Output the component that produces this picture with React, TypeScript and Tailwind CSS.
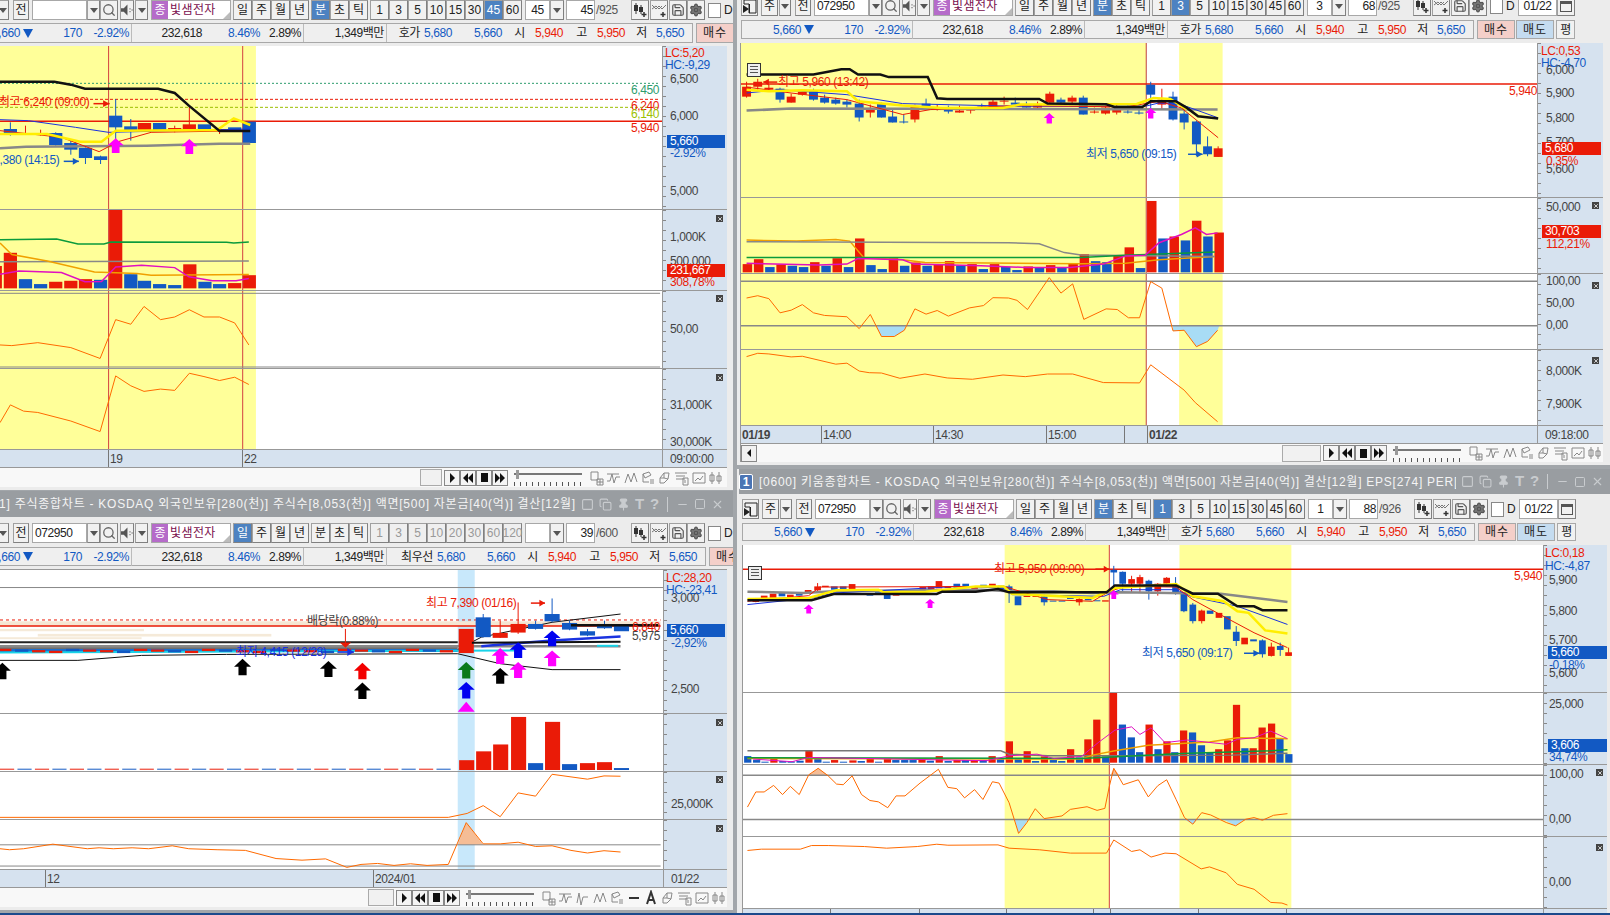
import React from 'react';
import { Search, Settings, Save, Copy, Pin, Minus, Square, X } from 'lucide-react';

const RED = '#ea1b07';
const BLUE = '#1259c3';
const ORANGE = '#ff6a00';
const MAG = '#ff00ff';
const YEL = '#ffff99';

type Candle = [number, 'R' | 'B', number, number, number?, number?];
type Bar = [number, 'R' | 'B', number];

// svg helpers. Panes use a stretched viewBox so coordinates stay in one grid per window
const L = ({ p, c, w = 1, dash }: { p: string; c: string; w?: number; dash?: string }) => (
  <polyline points={p} fill="none" stroke={c} strokeWidth={w} strokeDasharray={dash} vectorEffect="non-scaling-stroke" />
);
const Band = ({ a, b, c = YEL }: { a: number; b: number; c?: string }) => (
  <rect x={a} y={-2000} width={b - a} height={5000} fill={c} />
);
const Candles = ({ data, w }: { data: Candle[]; w: number }) => (
  <>
    {data.map(([x, col, t, b, wt, wb], i) => {
      const c = col === 'R' ? RED : BLUE;
      return (
        <g key={i}>
          {wt !== undefined && <L p={`${x},${wt} ${x},${wb ?? b}`} c={c} />}
          <rect x={x - w / 2} y={t} width={w} height={Math.max(b - t, 3)} fill={c} />
        </g>
      );
    })}
  </>
);
const Bars = ({ data, w, base }: { data: Bar[]; w: number; base: number }) => (
  <>
    {data.map(([x, col, t], i) => (
      <rect key={i} x={x} y={t} width={w} height={base - t} fill={col === 'R' ? RED : BLUE} />
    ))}
  </>
);
const UpArrow = ({ x, t, b, c, hw }: { x: number; t: number; b: number; c: string; hw: number }) => {
  const m = t + (b - t) * 0.48;
  const s = hw * 0.48;
  return <polygon fill={c} points={`${x},${t} ${x + hw},${m} ${x + s},${m} ${x + s},${b} ${x - s},${b} ${x - s},${m} ${x - hw},${m}`} />;
};
const SideArrow = ({ a, b, y, c, h = 14 }: { a: number; b: number; y: number; c: string; h?: number }) => {
  const d = b > a ? -1 : 1;
  const hx = b + d * Math.abs(b - a) * 0.4;
  return (
    <>
      <L p={`${a},${y} ${b},${y}`} c={c} w={1.5} />
      <polygon fill={c} points={`${b},${y} ${hx},${y - h} ${hx},${y + h}`} />
    </>
  );
};

// absolute text over a chart pane or an axis
const T = ({ c, children }: { c: string; children: React.ReactNode }) => (
  <span className={`absolute leading-[14px] whitespace-nowrap ${c}`}>{children}</span>
);
const Badge = ({ c, children }: { c: string; children: React.ReactNode }) => (
  <span className={`absolute h-[13px] leading-[13px] text-white pl-[3px] ${c}`}>{children}</span>
);
const Close = ({ c }: { c: string }) => (
  <span className={`absolute right-[4px] w-[7px] h-[7px] bg-[#444] flex items-center justify-center ${c}`}>
    <X size={6} color="#fff" strokeWidth={3} />
  </span>
);
const TableIcon = ({ c }: { c: string }) => (
  <span className={`absolute w-[14px] h-[14px] border border-[#333] bg-[#eee] p-[2px] ${c}`}>
    <span className="block w-full h-full bg-[repeating-linear-gradient(to_bottom,#555_0,#555_1px,transparent_1px,transparent_3px)]" />
  </span>
);

const Pane = ({ h, vb, axisW, axis, labels, children }: { h: string; vb: string; axisW: string; axis?: React.ReactNode; labels?: React.ReactNode; children: React.ReactNode }) => (
  <div className={`flex shrink-0 border-b border-[#989898] ${h}`}>
    <div className="relative flex-1 min-w-0 overflow-hidden bg-white">
      <svg className="absolute inset-0 w-full h-full" viewBox={vb} preserveAspectRatio="none">{children}</svg>
      {labels}
    </div>
    <div className={`relative shrink-0 overflow-hidden border-l border-[#989898] bg-[#d6e2ef] text-[#444] ${axisW}`}>
      <div className="absolute left-0 top-0 bottom-0 w-[3px] bg-[repeating-linear-gradient(to_bottom,#888_0,#888_1px,transparent_1px,transparent_10px)]" />
      {axis}
    </div>
  </div>
);

const Btn = ({ w, on, off, children }: { w: string; on?: boolean; off?: boolean; children?: React.ReactNode }) => (
  <div className={`h-[20px] shrink-0 flex items-center justify-center border border-[#a0a0a0] border-r-[#808080] border-b-[#808080] tracking-normal ${w} ${on ? 'bg-[#4d82c1] text-white' : off ? 'bg-[#efefef] text-[#999] tracking-[-0.6px]' : 'bg-[#f1f1f1] text-[#222]'}`}>
    {children}
  </div>
);
const Drop = ({ w = 'w-[13px]' }: { w?: string }) => (
  <Btn w={w}><span className="w-0 h-0 border-x-[4px] border-x-transparent border-t-[5px] border-t-[#555]" /></Btn>
);

const CandleIcon = () => (
  <svg width="16" height="16" viewBox="0 0 16 16"><path d="M4 1v11M9 3v9" stroke="#333" /><rect x="2" y="3" width="4" height="6" fill="#333" /><rect x="7" y="5" width="4" height="5" fill="#333" /><path d="M12 10v5M9.5 12.5h5" stroke="#333" strokeWidth="1.5" /></svg>
);
const LineIcon = () => (
  <svg width="16" height="16" viewBox="0 0 16 16" fill="none"><path d="M1 3l4 4 3-3 3 3 4-4M1 7l4-3 3 3 3-3" stroke="#777" /><path d="M12 10v5M9.5 12.5h5" stroke="#333" strokeWidth="1.5" /></svg>
);
const WindowIcon = () => (
  <svg width="14" height="15" viewBox="0 0 14 15"><path d="M1 1h12v13H6V5H1z" fill="none" stroke="#222" /><path d="M0 6l6 4-6 4z" fill="#222" /><path d="M6 5h1v9H6z" fill="#222" /></svg>
);
const SpeakerIcon = () => (
  <svg width="13" height="14" viewBox="0 0 13 14"><path d="M0 5h3l4-4v12l-4-4H0z" fill="#555" /><path d="M9 5h1.5v1.5H9zM9 8h1.5v1.5H9zM11.5 6h1v2h-1z" fill="#888" /></svg>
);

type ToolProps = { ml: string; code: string; dayOn?: boolean; periods: string[]; pick?: string; combo: string; count: string; total: string; right: 'date' | 'crop'; off?: boolean };
const Toolbar = ({ ml, code, dayOn, periods, pick, combo, count, total, right, off }: ToolProps) => (
  <div className={`flex items-center h-[20px] shrink-0 ${ml}`}>
    <Btn w="w-[17px] mr-[3px]"><WindowIcon /></Btn>
    <Btn w="w-[17px] mr-[1px]">주</Btn>
    <Drop w="w-[12px] mr-[4px]" />
    <Btn w="w-[16px] mr-[3px]">전</Btn>
    <div className="w-[55px] h-[20px] shrink-0 bg-white border border-[#a8a8a8] pl-[2px] leading-[18px] text-[#222]">{code}</div>
    <Drop />
    <Btn w="w-[18px] mr-[2px]"><Search size={14} color="#666" strokeWidth={2.2} /></Btn>
    <Btn w="w-[14px] mr-[1px]"><SpeakerIcon /></Btn>
    <Drop w="w-[13px] mr-[3px]" />
    <div className="relative w-[80px] h-[20px] shrink-0 mr-[2px] flex items-center bg-white border border-[#a8a8a8]">
      <span className="w-[16px] h-[18px] bg-[#b56bc9] text-white text-center leading-[18px] tracking-normal">종</span>
      <span className="pl-[2px] text-[#7a0f4e] tracking-[0.4px]">빛샘전자</span>
      <span className="absolute right-0 bottom-0 w-0 h-0 border-l-[7px] border-l-transparent border-b-[7px] border-b-[#bbb]" />
    </div>
    {['일', '주', '월', '년'].map((d) => <Btn key={d} w="w-[19px]" on={d === '일' && dayOn}>{d}</Btn>)}
    <span className="w-[2px] shrink-0" />
    {['분', '초', '틱'].map((d) => <Btn key={d} w="w-[19px]" on={d === '분' && !dayOn}>{d}</Btn>)}
    <span className="w-[2px] shrink-0" />
    {periods.map((p) => <Btn key={p} w="w-[19px]" on={p === pick} off={off}>{p}</Btn>)}
    <span className="w-[3px] shrink-0" />
    <div className="w-[25px] h-[20px] shrink-0 bg-white border border-[#a8a8a8] text-center leading-[18px]">{combo}</div>
    <Drop w="w-[14px] mr-[2px]" />
    <div className="w-[29px] h-[20px] shrink-0 bg-white border border-[#a8a8a8] text-right pr-[1px] leading-[18px]">{count}</div>
    <div className="w-[36px] shrink-0 pl-[1px] text-[#555]">{total}</div>
    <Btn w="w-[18px] mr-[1px]"><CandleIcon /></Btn>
    <Btn w="w-[18px] mr-[1px]"><LineIcon /></Btn>
    <Btn w="w-[18px]"><Save size={14} color="#555" /></Btn>
    <Btn w="w-[18px] mr-[3px]"><Settings size={14} color="#555" fill="#777" /></Btn>
    <span className="w-[13px] h-[15px] shrink-0 bg-white border border-[#888] mr-[3px]" />
    {right === 'date' ? (
      <>
        <span className="w-[9px] shrink-0 mr-[3px]">D</span>
        <div className="w-[39px] h-[20px] shrink-0 bg-white border border-[#a8a8a8] text-center leading-[18px]">01/22</div>
        <Btn w="w-[18px]"><span className="w-[12px] h-[11px] border border-[#555] border-t-[3px]" /></Btn>
      </>
    ) : (
      <span className="shrink-0">D</span>
    )}
  </div>
);

const Cell = ({ w, c, children }: { w: string; c?: string; children: React.ReactNode }) => (
  <div className={`shrink-0 text-right whitespace-nowrap ${w} ${c ?? ''}`}>{children}</div>
);
const InfoRow = ({ h, ml, quote, quoteW, buttons }: { h: string; ml: string; quote: string; quoteW: string; buttons: 'all' | 'crop' }) => (
  <div className={`flex items-center shrink-0 ${h} ${ml}`}>
    <div className="flex items-center h-full shrink-0 bg-[#efefef] border border-[#a8a8a8] w-fit text-[#222]">
      <Cell w="w-[72px] flex items-center justify-end gap-[3px]" c="text-[#1259c3]">5,660 <span className="w-0 h-0 border-x-[5px] border-x-transparent border-t-[9px] border-t-[#1259c3]" /></Cell>
      <Cell w="w-[49px]" c="text-[#1259c3]">170</Cell>
      <Cell w="w-[50px] pr-[2px] border-r border-[#bbb]" c="text-[#1259c3]">-2.92%</Cell>
      <Cell w="w-[70px]">232,618</Cell>
      <Cell w="w-[58px]" c="text-[#1259c3]">8.46%</Cell>
      <Cell w="w-[44px] pr-[2px] border-r border-[#bbb]">2.89%</Cell>
      <Cell w="w-[83px] pr-[2px] border-r border-[#bbb]">1,349백만</Cell>
      <Cell w={`${quoteW} text-center`}>{quote}</Cell>
      <Cell w="w-[32px]" c="text-[#1259c3]">5,680</Cell>
      <Cell w="w-[50px]" c="text-[#1259c3]">5,660</Cell>
      <Cell w="w-[7px] border-r border-[#bbb]"> </Cell>
      <Cell w="w-[16px] text-center">시</Cell>
      <Cell w="w-[38px]" c="text-[#ea1b07]">5,940</Cell>
      <Cell w="w-[24px] text-center">고</Cell>
      <Cell w="w-[38px]" c="text-[#ea1b07]">5,950</Cell>
      <Cell w="w-[22px] text-center">저</Cell>
      <Cell w="w-[38px] pr-[1px]" c="text-[#1259c3]">5,650</Cell>
      <Cell w="w-[7px]"> </Cell>
    </div>
    <div className="w-[38px] h-full shrink-0 ml-[3px] bg-[#f4cfc9] border border-[#a8a8a8] flex items-center justify-center tracking-[1px]">매수</div>
    {buttons !== 'crop' && (
      <>
        <div className="w-[38px] h-full shrink-0 ml-[1px] bg-[#c5dcf0] border border-[#a8a8a8] flex items-center justify-center tracking-[1px]">매도</div>
        <div className="w-[19px] h-full shrink-0 ml-[2px] bg-[#f1f1f1] border border-[#a8a8a8] flex items-center justify-center">평</div>
      </>
    )}
  </div>
);

const TitleBar = ({ h, text, ml, badge, textW }: { h: string; text: string; ml: string; badge?: boolean; textW: string }) => (
  <div className={`flex items-center shrink-0 bg-[#999da1] text-[#f4f4f4] ${h} ${ml}`}>
    {badge && <span className="w-[14px] h-[16px] shrink-0 mr-[6px] rounded-[2px] bg-[#4a74b4] border border-white text-white font-bold text-center leading-[14px]">1</span>}
    <div className={`overflow-hidden whitespace-nowrap shrink-0 tracking-[0.75px] ${textW}`}>{text}</div>
    <div className="flex items-center gap-[5px] pl-[5px] text-[#c9cccf] shrink-0">
      <Square size={13} /><Copy size={13} /><Pin size={13} fill="#c9cccf" />
      <span className="font-bold text-[15px] w-[10px]">T</span><span className="font-bold text-[15px] w-[9px]">?</span>
      <span className="w-px h-[15px] bg-[#c9cccf] mx-[3px]" /><Minus size={13} /><Square size={12} /><X size={13} />
    </div>
  </div>
);

const TimeRow = ({ h, children, axisW, axisLabel }: { h: string; children: React.ReactNode; axisW: string; axisLabel?: string }) => (
  <div className={`flex shrink-0 bg-[#d6e2ef] text-[#444] border-b border-[#989898] ${h}`}>
    <div className="relative flex-1 min-w-0 overflow-hidden">{children}</div>
    <div className={`shrink-0 border-l border-[#989898] pl-[7px] leading-[18px] ${axisW}`}>{axisLabel}</div>
  </div>
);
const Tick = ({ c, label, bold }: { c: string; label?: string; bold?: boolean }) => (
  <span className={`absolute top-0 bottom-0 border-l border-[#777] pl-[1px] leading-[18px] whitespace-nowrap ${bold ? 'font-bold' : ''} ${c}`}>{label}</span>
);

const NavBtn = ({ children }: { children: React.ReactNode }) => (
  <div className="w-[16px] h-[16px] shrink-0 bg-[#f4f4f4] border border-[#888] flex items-center justify-center">{children}</div>
);
const MINI = [
  'M2 2h7v8H2zM8 9h6v6H8zM11 9v6M8 12h6',
  'M1 11h3l2-7 2 9 2-6h4M1 4h12',
  'M2 13l3-9 3 8 3-9 3 9',
  'M3 4l6-2 2 3-6 3zM3 4v8h6M11 9v5M13 9v5',
  'M3 8l4-5h5l-1 6-4 4H3zM7 3v5H3M7 8l4 1',
  'M1 3h12M2 6h9M2 9h9M9 8h5v7H9zM11 10v3',
  'M2 3h12v10H2zM4 11l3-3 2 2 3-4',
  'M4 2v12M11 2v12M2 5h4v6H2zM9 6h4v5H9z',
];
const ExtraIcon = ['M3 8h10', 'M4 14L8 2l4 12M5.5 10h5'];
const Mini = ({ d, dark }: { d: string; dark?: boolean }) => (
  <svg width="16" height="16" viewBox="0 0 16 16" fill="none" className="shrink-0"><path d={d} stroke={dark ? '#333' : '#888'} strokeWidth={dark ? 2 : 1} /></svg>
);
const BottomRow = ({ h, leftBtn, blank, extra, pr }: { h: string; leftBtn?: boolean; blank: string; extra?: boolean; pr: string }) => (
  <div className={`flex items-center shrink-0 bg-[#f8f8f8] ${h} ${pr}`}>
    {leftBtn && <div className="w-[16px] h-[17px] shrink-0 bg-[#f1f1f1] border border-[#888] flex items-center justify-center"><span className="w-0 h-0 border-y-[4px] border-y-transparent border-r-[4px] border-r-[#111]" /></div>}
    <div className="flex-1" />
    <div className={`h-[17px] shrink-0 bg-[#f1f1f1] border border-[#aaa] mr-[2px] ${blank}`} />
    <NavBtn><svg width="8" height="10"><path d="M2 0l5 5-5 5z" fill="#111" /></svg></NavBtn>
    <NavBtn><svg width="10" height="10"><path d="M5 0v10L0 5zM10 0v10L5 5z" fill="#111" /></svg></NavBtn>
    <NavBtn><span className="w-[7px] h-[9px] bg-[#111]" /></NavBtn>
    <NavBtn><svg width="10" height="10"><path d="M0 0v10l5-5zM5 0v10l5-5z" fill="#111" /></svg></NavBtn>
    <div className="relative w-[68px] h-[17px] shrink-0 ml-[6px] mr-[7px]">
      <span className="absolute left-0 right-0 top-[4px] h-[2px] bg-[#777]" />
      <span className="absolute left-[2px] top-[1px] w-[3px] h-[9px] bg-[#999]" />
      <span className="absolute left-0 right-0 bottom-0 h-[4px] bg-[repeating-linear-gradient(to_right,#555_0,#555_1px,transparent_1px,transparent_6px)]" />
    </div>
    <div className="flex items-center gap-[1px]">
      {MINI.slice(0, 2).map((d) => <Mini key={d} d={d} />)}
      {extra && <Mini d="M2 13l2-10 2 12 2-8h5" />}
      {MINI.slice(2, 4).map((d) => <Mini key={d} d={d} />)}
      {extra && ExtraIcon.map((d) => <Mini key={d} d={d} dark />)}
      {MINI.slice(4).map((d) => <Mini key={d} d={d} />)}
    </div>
  </div>
);

/* ---------- top left ---------- */
const TL_CANDLES: Candle[] = [
  [22, 'B', 390, 405, 370, 410], [54, 'R', 402, 408, 380, 408], [86, 'R', 404, 408, 392, 410], [118, 'B', 402, 438, 400, 440],
  [150, 'B', 432, 452, 420, 467], [181, 'B', 447, 477, 445, 495], [213, 'B', 472, 483, 470, 495], [245, 'B', 350, 385, 300, 430],
  [277, 'B', 382, 395, 360, 425], [306, 'R', 372, 393], [338, 'B', 372, 393], [370, 'R', 387, 393, 380, 400],
  [401, 'R', 376, 390, 320, 392], [433, 'B', 376, 390], [465, 'R', 390, 393, 385, 405], [497, 'B', 385, 395], [528, 'B', 368, 432],
];
const TL_VOL: Bar[] = [[-24, 'R', 110], [8, 'R', 70], [40, 'B', 150], [72, 'B', 165], [104, 'R', 158], [136, 'R', 155], [167, 'R', 150], [199, 'B', 152], [231, 'R', -60], [263, 'B', 135], [292, 'B', 155], [324, 'B', 165], [356, 'B', 168], [388, 'R', 105], [420, 'B', 158], [451, 'B', 165], [483, 'R', 162], [514, 'R', 138]];
const TopLeft = () => (
  <div className="absolute left-0 top-0 w-[733px] h-[490px] overflow-hidden bg-[#ececec] flex flex-col">
    <Toolbar ml="ml-[-41px]" code="" periods={['1', '3', '5', '10', '15', '30', '45', '60']} pick="45" combo="45" count="45" total="/925" right="crop" />
    <InfoRow h="h-[20px] mt-[3px] mb-[3px]" ml="ml-[-40px]" quote="호가" quoteW="w-[33px]" buttons="crop" />
    <div className="w-[727px] flex flex-col">
      <Pane h="h-[164px]" vb="0 141 1402 489" axisW="w-[65px]"
        labels={<>
          <T c="-left-[1px] top-[49px] text-[#ea1b07]">최고 6,240 (09:00)</T>
          <T c="-left-[31px] top-[107px] text-[#1259c3]">최저 5,380 (14:15)</T>
          <T c="left-[631px] top-[37px] text-[#2e9d6e]">6,450</T>
          <T c="left-[631px] top-[53px] text-[#ea1b07]">6,240</T>
          <T c="left-[631px] top-[61px] text-[#9cbf00]">6,140</T>
          <T c="left-[631px] top-[75px] text-[#ea1b07]">5,940</T>
        </>}
        axis={<>
          <T c="left-[7px] top-[26px]">6,500</T>
          <T c="left-[7px] top-[63px]">6,000</T>
          <T c="left-[7px] top-[138px]">5,000</T>
          <T c="left-[2px] top-0 text-[#ea1b07]">LC:5,20</T>
          <T c="left-[2px] top-[12px] text-[#1259c3]">HC:-9,29</T>
          <Badge c="left-[4px] top-[89px] w-[58px] bg-[#1259c3]">5,660</Badge>
          <T c="left-[7px] top-[100px] text-[#1259c3]">-2.92%</T>
        </>}>
        <Band a={0} b={542} />
        <L p="230,0 230,700" c="#d34040" /><L p="514,0 514,700" c="#d34040" />
        <L p="0,253 1395,253" c="#2e9d6e" dash="2 2" />
        <L p="0,301 1395,301" c={RED} dash="3 2" />
        <L p="0,325 1395,325" c="#9cbf00" dash="3 2" />
        <L p="0,367 1402,367" c={RED} w={1.5} />
        <Candles data={TL_CANDLES} w={28} />
        <L p="0,448 55,443 310,440 465,434 530,434" c="#888" w={2.5} />
        <L p="0,362 60,365 160,385 230,400 530,390" c="#1a33e0" />
        <L p="0,395 130,415 210,458 250,428 320,400 530,395" c={RED} />
        <L p="0,405 100,405 170,428 215,428 245,395 460,393 495,358 530,378" c="#ffee00" w={2.5} />
        <L p="0,248 115,248 150,257 180,269 335,269 370,282 400,320 465,396 530,396" c="#111" w={2.5} />
        <UpArrow x={245} t={418} b={462} c={MAG} hw={17} /><UpArrow x={401} t={420} b={465} c={MAG} hw={17} />
        <SideArrow a={198} b={232} y={314} c={RED} h={10} />
        <SideArrow a={135} b={167} y={487} c="#1259c3" h={10} />
      </Pane>
      <Pane h="h-[81px]" vb="0 -60 1402 243" axisW="w-[65px]"
        axis={<>
          <T c="left-[7px] top-[20px]">1,000K</T><T c="left-[7px] top-[44px]">500,000</T>
          <Badge c="left-[4px] top-[54px] w-[58px] bg-[#ea1b07]">231,667</Badge>
          <T c="left-[7px] top-[65px] text-[#ea1b07]">308,78%</T><Close c="top-[5px]" />
        </>}>
        <Band a={0} b={542} />
        <Bars data={TL_VOL} w={28} base={178} />
        <L p="230,-60 230,183" c="#d34040" /><L p="514,-60 514,183" c="#d34040" />
        <L p="0,30 120,28 165,43 220,43 235,37 480,38 495,40 527,37" c="#0a9a3c" w={1.5} />
        <L p="0,97 527,95" c="#888" w={1.5} />
        <L p="0,40 25,75 100,95 200,128 290,133 320,138 527,136" c="#f0a000" w={1.5} />
        <L p="0,135 40,125 130,130 180,158 215,157 245,113 300,108 370,115 400,143 450,155 500,155 527,148" c="#e010c0" w={1.5} />
      </Pane>
      <Pane h="h-[78px]" vb="0 183 1402 234" axisW="w-[65px]" axis={<><T c="left-[7px] top-[31px]">50,00</T><Close c="top-[4px]" /></>}>
        <Band a={0} b={542} />
        <L p="230,183 230,417" c="#d34040" /><L p="514,183 514,417" c="#d34040" />
        <L p="0,190 1398,190" c="#888" /><L p="0,414 1398,414" c="#888" />
        <L p="0,347 25,349 80,340 150,355 212,388 245,270 277,284 305,230 340,270 370,262 401,240 432,262 465,262 497,280 527,347" c={ORANGE} />
      </Pane>
      <Pane h="h-[81px]" vb="0 417 1402 243" axisW="w-[65px]" axis={<><T c="left-[7px] top-[29px]">31,000K</T><T c="left-[7px] top-[66px]">30,000K</T><Close c="top-[5px]" /></>}>
        <Band a={0} b={542} />
        <L p="230,417 230,660" c="#d34040" /><L p="514,417 514,660" c="#d34040" />
        <L p="0,580 22,526 50,545 80,549 150,575 212,607 245,438 277,468 305,485 340,478 370,482 401,430 432,440 465,452 497,442 527,464" c={ORANGE} />
      </Pane>
    </div>
    <div className="w-[727px]">
      <TimeRow h="h-[18px]" axisW="w-[65px]" axisLabel="09:00:00">
        <Tick c="left-[108px]" label="19" /><Tick c="left-[242px]" label="22" />
      </TimeRow>
      <BottomRow h="h-[19px]" blank="w-[22px]" pr="pr-[3px]" />
    </div>
  </div>
);

/* ---------- top right ---------- */
const TR_CANDLES: Candle[] = [
  [20, 'R', 261, 291, 246, 294], [40, 'R', 246, 261, 237, 270], [60, 'R', 264, 270, 255, 276], [80, 'B', 267, 300, 264, 309], [100, 'R', 291, 309, 282, 309],
  [120, 'R', 276, 285, 270, 288], [140, 'B', 273, 300, 267, 303], [160, 'B', 294, 309, 285, 312], [180, 'B', 300, 312, 294, 315], [200, 'B', 306, 315, 300, 324],
  [222, 'B', 312, 354, 300, 366], [242, 'R', 330, 339, 315, 354], [262, 'B', 312, 354, 309, 354], [282, 'B', 351, 369, 330, 369], [302, 'B', 366, 369, 345, 372],
  [322, 'R', 321, 360, 315, 369], [342, 'B', 312, 321, 297, 324], [362, 'R', 324, 327, 315, 333], [382, 'B', 330, 336, 318, 342], [402, 'R', 333, 339, 318, 339],
  [422, 'R', 330, 333, 324, 342], [442, 'B', 321, 324, 312, 330], [462, 'R', 306, 324, 300, 330], [482, 'R', 303, 306, 291, 315], [502, 'B', 309, 315, 294, 318],
  [522, 'B', 318, 324, 306, 324], [542, 'R', 315, 324, 306, 330], [564, 'R', 282, 309, 276, 315], [584, 'B', 300, 309, 294, 315], [604, 'R', 294, 306, 288, 312],
  [624, 'B', 294, 345, 288, 345], [644, 'R', 336, 339, 324, 342], [664, 'R', 324, 342, 318, 345], [684, 'R', 324, 339, 315, 345], [704, 'B', 336, 339, 318, 342],
  [724, 'B', 339, 342, 318, 345], [745, 'B', 255, 285, 246, 330], [765, 'R', 300, 315, 267, 330], [785, 'B', 291, 360, 276, 363], [805, 'B', 342, 369, 330, 390],
  [827, 'B', 366, 435, 363, 471], [847, 'B', 441, 465, 411, 471], [866, 'R', 447, 473, 441, 473],
];
const TR_TOPS: ['R' | 'B', number][] = [['R', 105], ['R', 90], ['B', 114], ['R', 106], ['B', 110], ['B', 114], ['R', 99], ['B', 110], ['R', 87], ['B', 114], ['R', 27], ['B', 108], ['B', 120], ['R', 87], ['B', 110], ['R', 100], ['B', 110], ['R', 107], ['R', 96], ['B', 110], ['R', 105], ['B', 120], ['R', 105], ['B', 113], ['B', 123], ['R', 112], ['B', 116], ['R', 108], ['B', 115], ['R', 102], ['R', 75], ['B', 96], ['B', 99], ['R', 78], ['R', 54], ['B', 117], ['R', -87], ['B', 27], ['R', 21], ['B', 33], ['R', -27], ['B', 21], ['R', 9]];
const TR_VOL: Bar[] = TR_TOPS.map(([c, t], i) => [13 + i * 20.15, c, t]);
const TR_BANDS = () => (<><Band a={10} b={737} /><Band a={796} b={874} /></>);
const TopRight = () => (
  <div className="absolute left-[737px] top-[-4px] w-[873px] h-[469px] overflow-hidden bg-[#ececec] flex flex-col">
    <Toolbar ml="ml-[4px]" code="072950" periods={['1', '3', '5', '10', '15', '30', '45', '60']} pick="3" combo="3" count="68" total="/925" right="date" />
    <InfoRow h="h-[19px] mt-[4px] mb-[4px]" ml="ml-[4px]" quote="호가" quoteW="w-[33px]" buttons="all" />
    <div className="w-[863px] ml-[3px] border-l border-[#989898] flex flex-col">
      <Pane h="h-[155px]" vb="10 129 1428 465" axisW="w-[66px]"
        labels={<>
          <TableIcon c="left-[6px] top-[20px]" />
          <T c="left-[37px] top-[32px] text-[#ea1b07]">최고 5,960 (13:42)</T>
          <T c="left-[345px] top-[104px] text-[#1259c3]">최저 5,650 (09:15)</T>
          <T c="left-[768px] top-[41px] text-[#ea1b07]">5,940</T>
        </>}
        axis={<>
          <T c="left-[8px] top-[20px]">6,000</T><T c="left-[8px] top-[43px]">5,900</T><T c="left-[8px] top-[68px]">5,800</T>
          <T c="left-[8px] top-[92px]">5,700</T><T c="left-[8px] top-[119px]">5,600</T>
          <T c="left-[3px] top-[1px] text-[#ea1b07]">LC:0,53</T><T c="left-[3px] top-[13px] text-[#1259c3]">HC:-4,70</T>
          <Badge c="left-[4px] top-[99px] w-[59px] bg-[#ea1b07]">5,680</Badge>
          <T c="left-[8px] top-[111px] text-[#ea1b07]">0,35%</T>
        </>}>
        <TR_BANDS />
        <L p="737,129 737,600" c="#c04040" />
        <L p="10,253 1438,253" c={RED} w={1.5} />
        <Candles data={TR_CANDLES} w={16} />
        <L p="20,333 100,327 865,330" c="#888" w={2.5} />
        <L p="20,280 80,270 200,285 300,312 500,320 735,320 760,310 800,315 866,355" c="#1a33e0" />
        <L p="20,262 100,280 200,300 300,345 350,330 500,318 700,322 760,305 800,325 866,415" c={RED} />
        <L p="20,270 60,275 120,272 200,275 220,305 300,318 370,325 480,325 510,315 720,313 750,295 780,298 810,330" c="#ffee00" w={2.5} />
        <L p="20,224 140,224 190,208 205,208 220,224 260,224 275,232 345,232 362,296 380,298 545,298 560,312 665,314 680,322 730,322 745,305 790,305 810,325 830,350 866,357" c="#111" w={2.5} />
        <UpArrow x={563} t={340} b={372} c={MAG} hw={10} /><UpArrow x={745} t={325} b={357} c={MAG} hw={10} />
        <SideArrow a={75} b={50} y={247} c={RED} h={10} />
        <SideArrow a={812} b={838} y={465} c={BLUE} h={10} />
      </Pane>
      <Pane h="h-[76px]" vb="10 -96 1428 228" axisW="w-[66px]"
        axis={<>
          <T c="left-[8px] top-[2px]">50,000</T>
          <Badge c="left-[4px] top-[27px] w-[59px] bg-[#ea1b07]">30,703</Badge>
          <T c="left-[8px] top-[39px] text-[#ea1b07]">112,21%</T><Close c="top-[4px]" />
        </>}>
        <TR_BANDS />
        <L p="737,-96 737,132" c="#c04040" />
        <Bars data={TR_VOL} w={17} base={130} />
        <L p="20,32 110,35 180,30 205,35 230,85 300,92 340,100 620,104 700,102 760,92 860,82" c="#f0a000" w={1.5} />
        <L p="20,37 490,40 545,43 590,70 620,77 860,82" c="#888" w={1.5} />
        <L p="20,85 620,85 700,78 860,68" c="#0a9a3c" w={1.5} />
        <L p="20,102 70,105 150,108 200,105 220,88 300,92 320,105 440,110 520,115 600,115 660,105 700,80 735,78 760,40 800,15 825,-5 845,15 865,10" c="#e010c0" w={1.5} />
      </Pane>
      <Pane h="h-[76px]" vb="10 132 1428 228" axisW="w-[66px]"
        axis={<><T c="left-[8px] top-0">100,00</T><T c="left-[8px] top-[22px]">50,00</T><T c="left-[8px] top-[44px]">0,00</T><Close c="top-[8px]" /></>}>
        <TR_BANDS />
        <polygon fill="#a8dcf5" points="253,289 262,322 285,322 303,303 306,289" />
        <polygon fill="#a8dcf5" points="785,289 785,305 805,303 827,353 847,337 865,303 868,289" />
        <L p="737,132 737,360" c="#c04040" />
        <L p="10,154 1438,154" c="#888" w={1.5} /><L p="10,289 1438,289" c="#888" w={1.5} />
        <L p="20,205 40,198 60,207 80,250 100,242 120,225 140,250 160,258 200,262 222,298 242,255 262,322 285,322 303,303 322,238 342,254 362,243 382,260 420,235 445,228 462,204 490,205 505,212 524,240 563,143 584,190 605,162 625,270 665,238 685,240 705,265 725,265 745,155 765,175 785,305 805,303 827,353 847,337 865,303" c={ORANGE} />
      </Pane>
      <Pane h="h-[76px]" vb="10 360 1428 228" axisW="w-[66px]" axis={<><T c="left-[8px] top-[14px]">8,000K</T><T c="left-[8px] top-[47px]">7,900K</T><Close c="top-[7px]" /></>}>
        <TR_BANDS />
        <L p="737,360 737,600" c="#c04040" />
        <L p="20,380 40,370 60,372 100,381 120,379 180,403 200,400 222,424 240,429 262,430 295,446 340,433 380,445 425,449 480,436 520,441 560,433 605,433 660,459 725,460 745,405 805,482 825,520 865,578" c={ORANGE} />
      </Pane>
      <TimeRow h="h-[18px]" axisW="w-[66px]" axisLabel="09:18:00">
        <Tick c="left-0 border-l-0" label="01/19" bold /><Tick c="left-[80px]" label="14:00" /><Tick c="left-[192px]" label="14:30" />
        <Tick c="left-[305px]" label="15:00" /><Tick c="left-[383px]" /><Tick c="left-[406px]" label="01/22" bold />
      </TimeRow>
      <BottomRow h="h-[18px]" leftBtn blank="w-[39px]" pr="pr-0" />
    </div>
  </div>
);

/* ---------- bottom left ---------- */
const BL_SMALL: Candle[] = Array.from({ length: 27 }, (_, i): Candle => [10 + i * 36, i % 3 === 2 ? 'R' : i % 3 === 1 ? 'B' : 'R', 505 + (i % 4) * 2, 512 + (i % 4) * 2]);
const BL_CANDLES: Candle[] = [
  [988, 'R', 445, 518], [1024, 'B', 410, 470, 400, 470], [1060, 'R', 457, 472, 420, 472], [1098, 'R', 430, 456, 365, 460], [1135, 'B', 430, 445, 420, 447],
  [1170, 'B', 400, 422, 353, 425], [1207, 'B', 427, 447, 420, 449], [1245, 'B', 452, 465, 445, 467], [1281, 'B', 430, 443, 420, 445], [1317, 'B', 432, 452],
];
const BL_VOL: Bar[] = [[973, 'R', 180], [1009, 'R', 153], [1045, 'R', 132], [1083, 'R', 48], [1119, 'B', 189], [1155, 'R', 63], [1191, 'B', 192], [1229, 'R', 189], [1265, 'R', 186], [1301, 'B', 204]];
const BL_DASH = Array.from({ length: 26 }, (_, i) => i);
const BottomLeft = () => (
  <div className="absolute left-0 top-[491px] w-[733px] h-[419px] overflow-hidden bg-[#ececec] flex flex-col">
    <TitleBar h="h-[26px]" ml="ml-[-5px]" textW="w-[581px]" text="[1] 주식종합차트 - KOSDAQ 외국인보유[280(천)] 주식수[8,053(천)] 액면[500] 자본금[40(억)] 결산[12월] EPS[274] PER[2" />
    <div className="h-[6px] shrink-0" />
    <Toolbar ml="ml-[-41px]" code="072950" dayOn periods={['1', '3', '5', '10', '20', '30', '60', '120']} combo="" count="39" total="/600" right="crop" off />
    <InfoRow h="h-[19px] mt-[4px] mb-[3px]" ml="ml-[-40px]" quote="최우선" quoteW="w-[46px]" buttons="crop" />
    <div className="w-[727px] flex flex-col border-t border-[#989898]">
      <Pane h="h-[144px]" vb="0 267 1405 432" axisW="w-[64px]"
        labels={<>
          <T c="left-[307px] top-[44px] text-[#444]">배당락(0.88%)</T>
          <T c="left-[426px] top-[26px] text-[#ea1b07]">최고 7,390 (01/16)</T>
          <T c="left-[236px] top-[75px] text-[#1a2fe0]">최저 4,415 (12/28)</T>
          <T c="left-[632px] top-[50px] text-[#ea1b07]">6,840</T>
          <T c="left-[632px] top-[59px] text-[#444]">5,975</T>
        </>}
        axis={<>
          <T c="left-[7px] top-[21px]">3,000</T><T c="left-[7px] top-[112px]">2,500</T>
          <T c="left-[2px] top-[1px] text-[#ea1b07]">LC:28,20</T><T c="left-[2px] top-[13px] text-[#1259c3]">HC:-23,41</T>
          <Badge c="left-[3px] top-[54px] w-[58px] bg-[#1259c3]">5,660</Badge>
          <T c="left-[7px] top-[66px] text-[#1259c3]">-2,92%</T>
        </>}>
        <Band a={970} b={1006} c="#c8e8fb" />
        <L p="0,320 1405,320" c="#888" />
        <rect x={0} y={422} width={1400} height={15} fill="#f5e6d3" />
        <rect x={0} y={445} width={305} height={7} fill="#f5ead9" /><rect x={80} y={460} width={495} height={8} fill="#f5ead9" /><rect x={0} y={470} width={300} height={6} fill="#f5ead9" />
        <L p="0,418 1400,418" c={RED} dash="3 3" />
        <L p="0,436 1400,436" c={RED} w={1.5} />
        <L p="0,485 970,485" c="#222" w={2} />
        <L p="0,497 1315,497" c="#888" w={2.5} />
        <L p="0,503 970,503" c="#111" />
        <L p="0,510 970,510" c="#1a6fd0" w={3} />
        <L p="0,516 1100,510" c="#19d3e8" w={2} />
        <L p="0,540 165,540 300,525 480,522 970,520 1060,550 1170,568 1315,568" c="#111" />
        <L p="970,507 1020,470 1170,425 1315,400" c="#111" />
        <Candles data={BL_SMALL} w={28} />
        <Candles data={BL_CANDLES} w={32} />
        <L p="1020,497 1170,480 1315,468" c="#1a33e0" w={2.5} />
        <L p="1000,487 1315,484" c="#111" w={2} />
        <L p="1210,434 1395,434" c="#111" w={2.5} />
        <L p="1265,496 1310,496" c="#19d3e8" w={2} />
        <L p="732,445 732,490" c={RED} /><polygon fill={RED} points="720,486 744,486 732,502" />
        <SideArrow a={1125} b={1155} y={367} c={RED} h={10} />
        <SideArrow a={715} b={750} y={515} c="#1a33e0" h={12} />
        <UpArrow x={5} t={547} b={597} c="#000" hw={18} /><UpArrow x={514} t={535} b={585} c="#000" hw={18} />
        <UpArrow x={696} t={542} b={590} c="#000" hw={18} /><UpArrow x={768} t={547} b={597} c="#f20000" hw={18} />
        <UpArrow x={768} t={607} b={657} c="#000" hw={18} /><UpArrow x={988} t={545} b={595} c="#0a7a1a" hw={18} />
        <UpArrow x={988} t={605} b={655} c="#0000f0" hw={18} /><UpArrow x={1060} t={503} b={551} c={MAG} hw={18} />
        <UpArrow x={1060} t={563} b={611} c="#000" hw={18} /><UpArrow x={1098} t={485} b={533} c="#0000f0" hw={18} />
        <UpArrow x={1098} t={545} b={593} c={MAG} hw={18} /><UpArrow x={1170} t={450} b={497} c="#0000f0" hw={18} />
        <UpArrow x={1170} t={510} b={558} c={MAG} hw={18} />
        <polygon fill={MAG} points="988,665 970,695 1006,695" />
      </Pane>
      <Pane h="h-[58px]" vb="0 39 1405 174" axisW="w-[64px]" axis={<Close c="top-[5px]" />}>
        <Band a={970} b={1006} c="#c8e8fb" />
        {BL_DASH.map((i) => <rect key={i} x={i * 37} y={206} width={30} height={3} fill={i % 2 ? BLUE : RED} />)}
        <Bars data={BL_VOL} w={32} base={210} />
      </Pane>
      <Pane h="h-[48px]" vb="0 213 1405 144" axisW="w-[64px]" axis={<><T c="left-[7px] top-[25px]">25,000K</T><Close c="top-[4px]" /></>}>
        <Band a={970} b={1006} c="#c8e8fb" />
        <L p="0,352 950,352 990,340 1024,316 1060,350 1098,277 1135,287 1170,220 1245,235 1280,225 1315,226" c={ORANGE} />
      </Pane>
      <Pane h="h-[50px]" vb="0 357 1405 150" axisW="w-[64px]" axis={<Close c="top-[5px]" />}>
        <Band a={970} b={1006} c="#c8e8fb" />
        <polygon fill="#f5bd96" points="970,433 988,365 1024,433" />
        <L p="0,433 1400,433" c="#888" /><L p="0,498 1400,498" c="#888" />
        <L p="0,445 20,448 50,445 112,431 185,445 210,442 240,445 280,442 315,445 365,436 400,445 460,448 520,450 585,475 640,480 690,476 735,502 765,493 800,490 835,496 870,491 905,496 950,493 988,365 1024,430 1060,430 1098,425 1135,438 1170,436 1210,450 1245,458 1280,451 1315,455" c={ORANGE} />
      </Pane>
      <TimeRow h="h-[18px]" axisW="w-[64px]" axisLabel="01/22">
        <Tick c="left-[45px]" label="12" /><Tick c="left-[373px]" label="2024/01" />
      </TimeRow>
      <BottomRow h="h-[19px]" blank="w-[26px]" extra pr="pr-0" />
    </div>
  </div>
);

/* ---------- bottom right ---------- */
const BR_CANDLES: Candle[] = [
  [35, 'R', 388, 397, 385, 398], [50, 'R', 378, 388], [66, 'R', 372, 385], [82, 'B', 370, 380], [97, 'R', 375, 382], [113, 'B', 370, 378], [129, 'R', 361, 372], [146, 'R', 350, 362, 340, 365],
  [160, 'R', 348, 352], [176, 'B', 350, 360], [192, 'B', 350, 362], [208, 'R', 343, 362], [225, 'R', 358, 366], [240, 'B', 370, 378], [255, 'B', 368, 375], [271, 'B', 375, 388], [287, 'R', 368, 378],
  [303, 'B', 365, 370], [319, 'R', 362, 366], [335, 'R', 352, 362], [350, 'R', 350, 362], [364, 'R', 334, 356], [380, 'R', 350, 355], [396, 'B', 342, 354], [412, 'B', 342, 352], [428, 'R', 352, 362],
  [444, 'B', 345, 352], [460, 'R', 342, 354], [476, 'B', 348, 360], [490, 'B', 350, 365, 345, 400], [506, 'B', 380, 407], [522, 'R', 378, 382], [538, 'R', 378, 382], [553, 'B', 380, 398, 375, 408],
  [569, 'B', 393, 396], [585, 'B', 393, 396], [600, 'B', 380, 388], [616, 'R', 388, 398, 380, 408], [632, 'B', 388, 392], [648, 'B', 392, 395], [663, 'R', 392, 396], [678, 'B', 300, 308, 288, 368],
  [694, 'B', 306, 342, 305, 365], [710, 'R', 328, 342, 318, 368], [725, 'R', 322, 342, 315, 370], [741, 'B', 333, 365, 330, 390], [757, 'R', 342, 365, 340, 378], [773, 'R', 324, 342, 322, 350],
  [789, 'B', 350, 370, 322, 375], [804, 'B', 372, 425, 370, 428], [820, 'B', 405, 455, 400, 462], [836, 'R', 423, 455, 420, 462], [851, 'B', 423, 433], [867, 'R', 430, 445], [882, 'B', 440, 480],
  [898, 'B', 487, 515, 470, 530], [913, 'R', 505, 525], [929, 'B', 510, 516], [945, 'B', 513, 555, 510, 565], [961, 'R', 532, 560, 520, 562], [977, 'B', 530, 542, 520, 560], [992, 'R', 549, 560, 535, 560],
];
const BR_VOL: Bar[] = [[14, 'B', 171], [30, 'B', 183], [45, 'B', 188], [61, 'R', 180], [77, 'B', 186], [92, 'B', 187], [108, 'B', 185], [124, 'R', 155], [140, 'B', 180], [155, 'B', 188], [170, 'R', 183], [186, 'B', 188], [203, 'R', 184], [218, 'B', 186], [234, 'R', 177], [249, 'B', 188], [265, 'R', 177], [280, 'B', 183], [296, 'B', 183], [311, 'B', 183], [327, 'R', 178], [342, 'B', 185], [358, 'R', 171], [374, 'B', 186], [390, 'R', 183], [405, 'B', 183], [421, 'R', 183], [437, 'B', 183], [453, 'R', 171], [468, 'B', 180], [484, 'R', 126], [500, 'B', 177], [516, 'R', 156], [531, 'B', 186], [547, 'R', 172], [563, 'B', 183], [578, 'B', 186], [594, 'R', 150], [610, 'B', 175], [625, 'R', 120], [641, 'R', 60], [657, 'B', 172], [671, 'R', -21], [687, 'B', 75], [703, 'B', 114], [718, 'B', 159], [735, 'R', 75], [751, 'B', 150], [767, 'R', 126], [781, 'B', 159], [797, 'R', 93], [813, 'B', 99], [829, 'B', 138], [844, 'B', 159], [860, 'R', 150], [876, 'R', 123], [892, 'R', 15], [907, 'B', 147], [922, 'R', 147], [938, 'R', 84], [955, 'R', 72], [970, 'B', 117], [986, 'B', 165]];
const BR_BANDS = () => (<><Band a={482} b={670} /><Band a={796} b={997} /></>);
const BottomRight = () => (
  <div className="absolute left-[737px] top-[469px] w-[873px] h-[444px] overflow-hidden bg-[#ececec] flex flex-col">
    <TitleBar h="h-[25px]" ml="ml-[2px]" badge textW="w-[697px]" text="[0600] 키움종합차트 - KOSDAQ 외국인보유[280(천)] 주식수[8,053(천)] 액면[500] 자본금[40(억)] 결산[12월] EPS[274] PER[2" />
    <div className="h-[5px] shrink-0" />
    <Toolbar ml="ml-[5px]" code="072950" periods={['1', '3', '5', '10', '15', '30', '45', '60']} pick="1" combo="1" count="88" total="/926" right="date" />
    <InfoRow h="h-[18px] mt-[4px] mb-[4px]" ml="ml-[5px]" quote="호가" quoteW="w-[33px]" buttons="all" />
    <div className="w-[865px] ml-[5px] border-l border-[#989898] flex flex-col">
      <Pane h="h-[148px]" vb="12 225 1437 444" axisW="w-[64px]"
        labels={<>
          <TableIcon c="left-[5px] top-[21px]" />
          <T c="left-[251px] top-[17px] text-[#ea1b07]">최고 5,950 (09:00)</T>
          <T c="left-[399px] top-[101px] text-[#1259c3]">최저 5,650 (09:17)</T>
          <T c="left-[771px] top-[24px] text-[#ea1b07]">5,940</T>
        </>}
        axis={<>
          <T c="left-[5px] top-[28px]">5,900</T><T c="left-[5px] top-[59px]">5,800</T><T c="left-[5px] top-[88px]">5,700</T><T c="left-[5px] top-[121px]">5,600</T>
          <T c="left-[1px] top-px text-[#ea1b07]">LC:0,18</T><T c="left-[1px] top-[14px] text-[#1259c3]">HC:-4,87</T>
          <Badge c="left-[4px] top-[101px] w-[59px] bg-[#1259c3]">5,660</Badge>
          <T c="left-[5px] top-[113px] text-[#1259c3]">-0,18%</T>
        </>}>
        <BR_BANDS />
        <L p="670,225 670,670" c="#d34040" />
        <L p="12,298 1449,298" c={RED} w={1.5} />
        <Candles data={BR_CANDLES} w={12} />
        <L p="20,366 120,370 175,365 440,360 490,365 570,365 640,370 690,368 870,372 990,397" c="#888" w={2.5} />
        <L p="20,405 135,385 175,370 400,350 480,355 495,375 660,380 690,360 790,360 820,382 900,410 990,465" c="#1a33e0" />
        <L p="20,395 130,378 150,352 480,350 560,390 640,395 670,365 700,350 790,352 820,390 880,445 930,490 990,535" c={RED} />
        <L p="20,388 130,385 180,362 255,360 265,368 340,366 430,350 480,350 495,372 640,385 680,355 790,343 820,380 875,395 900,425 920,430 950,483 990,492" c="#ffee00" w={2.5} />
        <L p="20,392 135,392 175,373 360,373 370,366 430,366 470,358 490,368 665,368 680,347 790,347 820,372 865,372 900,410 930,410 945,422 990,422" c="#111" w={2.5} />
        <UpArrow x={130} t={405} b={432} c={MAG} hw={9} /><UpArrow x={348} t={388} b={415} c={MAG} hw={9} /><UpArrow x={678} t={362} b={388} c={MAG} hw={9} />
        <SideArrow a={645} b={670} y={298} c={RED} h={10} />
        <SideArrow a={912} b={940} y={552} c={BLUE} h={10} />
      </Pane>
      <Pane h="h-[72px]" vb="12 -21 1437 216" axisW="w-[64px]"
        axis={<>
          <T c="left-[5px] top-[4px]">25,000</T>
          <Badge c="left-[4px] top-[46px] w-[59px] bg-[#1259c3]">3,606</Badge>
          <T c="left-[5px] top-[57px] text-[#1259c3]">34,74%</T>
        </>}>
        <BR_BANDS />
        <L p="670,-21 670,195" c="#d34040" />
        <Bars data={BR_VOL} w={13} base={191} />
        <L p="20,155 475,155 490,165 560,170 700,170 890,168 990,162" c="#777" w={1.5} />
        <L p="20,178 620,180 640,168 680,155 740,138 850,128 900,115 990,118" c="#f0a000" w={1.5} />
        <L p="20,176 620,178 800,163 960,155 990,152" c="#0a9a3c" w={1.5} />
        <L p="30,180 100,188 130,175 450,185 490,170 540,165 570,178 620,172 650,130 680,92 710,82 725,105 745,85 770,130 810,122 880,135 900,120 930,115 960,95 990,118" c="#e010c0" />
      </Pane>
      <Pane h="h-[72px]" vb="12 195 1437 216" axisW="w-[64px]"
        axis={<><T c="left-[5px] top-[2px]">100,00</T><T c="left-[5px] top-[47px]">0,00</T><Close c="top-[4px]" /></>}>
        <BR_BANDS />
        <polygon fill="#a8dcf5" points="500,361 507,403 525,361" /><polygon fill="#a8dcf5" points="805,361 820,375 828,361" /><polygon fill="#a8dcf5" points="875,361 897,380 912,361" />
        <polygon fill="#f5bd96" points="130,226 147,205 165,226" /><polygon fill="#f5bd96" points="672,226 678,205 688,226" />
        <L p="670,195 670,411" c="#d34040" />
        <L p="12,226 1449,226" c="#888" w={1.5} /><L p="12,361 1449,361" c="#888" w={1.5} />
        <L p="20,323 35,277 50,277 67,257 83,285 97,260 113,285 130,225 147,205 165,228 180,253 192,255 208,228 225,285 240,303 255,307 272,325 287,289 303,289 330,250 363,208 380,263 396,267 410,295 428,270 443,300 460,246 472,250 490,310 507,403 522,370 537,328 553,358 585,350 600,330 630,322 648,333 662,327 670,260 678,205 695,255 722,240 740,292 757,258 773,240 790,300 805,355 820,375 836,340 852,347 880,370 897,380 915,360 930,355 945,363 965,348 990,343" c={ORANGE} />
      </Pane>
      <Pane h="h-[72px]" vb="12 411 1437 216" axisW="w-[64px]" axis={<><T c="left-[5px] top-[38px]">0,00</T><Close c="top-[7px]" /></>}>
        <BR_BANDS />
        <L p="670,411 670,627" c="#d34040" />
        <L p="20,452 45,448 115,448 135,437 165,437 230,440 270,445 325,440 360,433 380,436 470,435 490,445 545,450 600,460 665,460 678,420 710,455 725,450 745,472 770,460 790,462 835,508 850,502 880,520 900,555 930,570 960,610 980,612 990,618" c={ORANGE} />
      </Pane>
      <TimeRow h="h-[18px]" axisW="w-[64px]">
        <Tick c="left-[87px]" /><Tick c="left-[176px]" /><Tick c="left-[263px]" /><Tick c="left-[350px]" /><Tick c="left-[367px]" /><Tick c="left-[455px]" /><Tick c="left-[543px]" />
      </TimeRow>
    </div>
  </div>
);

export default function App() {
  return (
    <div className="relative w-[1610px] h-[915px] overflow-hidden bg-[#a2a6aa] text-[12px] tracking-[-0.4px] text-[#222] font-['Liberation_Sans','Noto_Sans_CJK_KR',sans-serif]">
      <TopLeft />
      <TopRight />
      <BottomLeft />
      <BottomRight />
      <div className="absolute left-0 right-0 bottom-0 h-[2px] bg-[#1c4a8c]" />
    </div>
  );
}
